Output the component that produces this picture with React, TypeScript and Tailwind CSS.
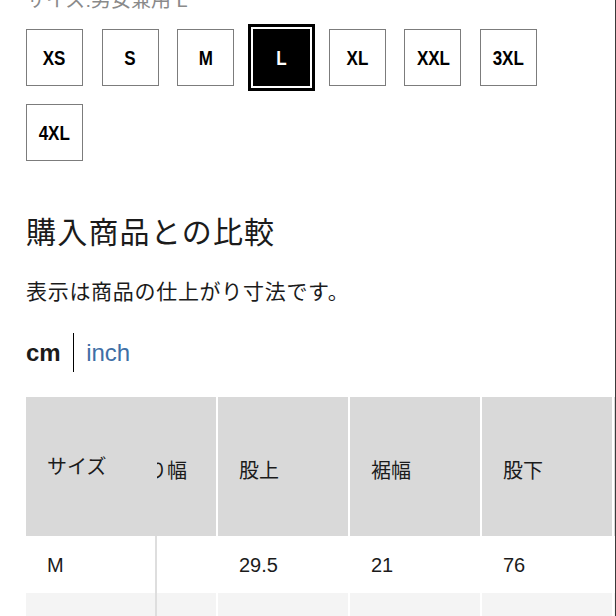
import React from "react";

const sizes = ["XS", "S", "M", "L", "XL", "XXL", "3XL", "4XL"];
const selected = "L";

const columns = [
     { label: "わたり幅", m: "33.5", l: "35" },
     { label: "股上", m: "29.5", l: "30.5" },
     { label: "裾幅", m: "21", l: "22" },
     { label: "股下", m: "76", l: "78" },
     { label: "ウエスト", m: "76", l: "82" },
];

const font = { fontFamily: '"Liberation Sans", "Noto Sans CJK JP", sans-serif' };

export default function App() {
     return (
          <div
               className="w-[616px] h-[616px] overflow-hidden bg-white text-[#1b1b1b] border-r-[1.5px] border-[#3a3a3a]"
               style={font}
          >
               <div className="pl-[26px]">
                    {/* Current size label (scrolled partly out of view) */}
                    <p className="mt-[-14px] text-[20px] leading-[28px] text-[#8a8a8a]">サイズ:男女兼用 L</p>

                    {/* Size chips */}
                    <div className="mt-[15px] grid grid-cols-[repeat(7,57px)] gap-x-[18.7px] gap-y-[18px]">
                         {sizes.map((s) => {
                              const isActive = s === selected;
                              return (
                                   <div
                                        key={s}
                                        className={
                                             isActive
                                                  ? "h-[57px] w-[57px] flex items-center justify-center bg-black text-white outline-[3.5px] outline-solid outline-black outline-offset-[2.5px]"
                                                  : "h-[57px] w-[57px] flex items-center justify-center border-[1.5px] border-[#7c7c7c] bg-white text-black"
                                        }
                                   >
                                        <span className="text-[21px] font-bold scale-x-[0.81] leading-none">{s}</span>
                                   </div>
                              );
                         })}
                    </div>

                    {/* Comparison heading */}
                    <h2 className="mt-[52px] text-[30px] leading-[40px] tracking-[1.2px] font-normal">購入商品との比較</h2>
                    <p className="mt-[24px] text-[21px] leading-[30px] tracking-[0.7px]">表示は商品の仕上がり寸法です。</p>

                    {/* Unit switch */}
                    <div className="mt-[26px] flex items-center h-[39px]">
                         <span className="text-[24px] font-bold leading-none">cm</span>
                         <span className="mx-[12px] h-[39px] w-[1.5px] bg-black" />
                         <span className="text-[24px] leading-none text-[#3f6fa6]">inch</span>
                    </div>

                    {/* Size table */}
                    <div className="mt-[25px] flex text-[20px]">
                         <div className="w-[131px] shrink-0">
                              <div className="h-[139px] bg-[#d9d9d9] flex items-center pl-[21px]">サイズ</div>
                              <div className="h-[57px] bg-white border-r-2 border-[#dedede] flex items-center pl-[21px]">M</div>
                              <div className="h-[57px] bg-[#f4f4f4] border-r-2 border-[#dedede] flex items-start pt-[22px] pl-[21px]">L</div>
                         </div>
                         <div className="flex-1 overflow-hidden">
                              <div className="flex ml-[-71px]">
                                   {columns.map((c) => (
                                        <div key={c.label} className="w-[132px] shrink-0 border-r-2 border-white">
                                             <div className="h-[139px] bg-[#d9d9d9] flex items-center pl-[21px] pt-[8px] whitespace-nowrap">
                                                  {c.label}
                                             </div>
                                             <div className="h-[57px] bg-white flex items-center pl-[21px]">{c.m}</div>
                                             <div className="h-[57px] bg-[#f4f4f4] flex items-start pt-[22px] pl-[21px]">{c.l}</div>
                                        </div>
                                   ))}
                              </div>
                         </div>
                    </div>
               </div>
          </div>
     );
}
